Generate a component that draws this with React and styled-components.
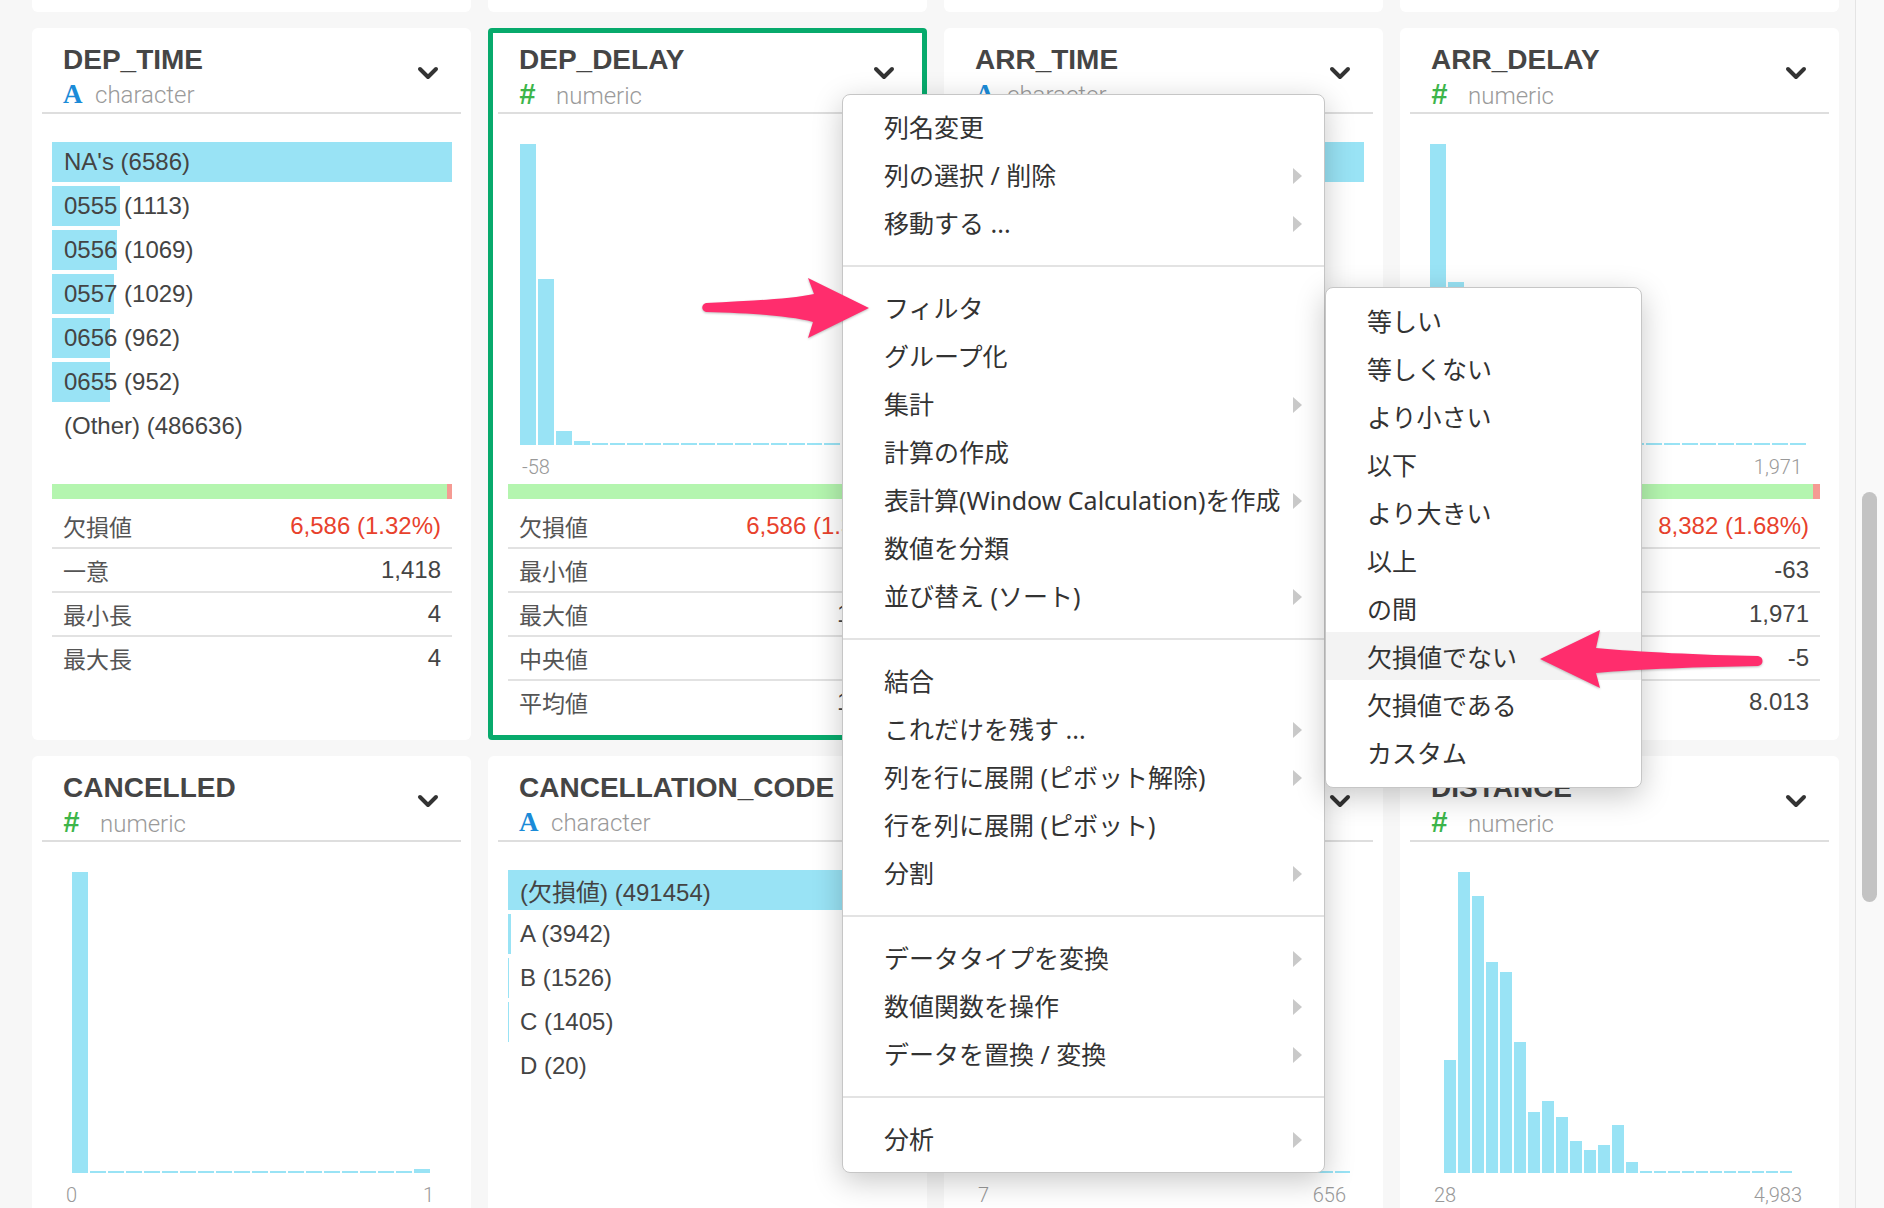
import styled, { createGlobalStyle } from 'styled-components';

const GlobalStyle = createGlobalStyle`
  html, body {
    margin: 0;
    padding: 0;
    background: #f7f7f7;
    overflow: hidden;
  }
  body {
    font-family: "Liberation Sans", "Noto Sans CJK JP", sans-serif;
  }
`;

// Layout
const Page = styled.div`
  position: relative;
  width: 1884px;
  height: 1208px;
  display: flex;
  overflow: hidden;
  background: #f7f7f7;
`;

const Main = styled.div`
  flex: 1;
  overflow: hidden;
`;

const ScrollTrack = styled.div`
  width: 28px;
  border-left: 1px solid #e4e4e4;
  background: #f9f9f9;
`;

const ScrollThumb = styled.div`
  width: 15px;
  height: 410px;
  margin: 492px 0 0 6px;
  border-radius: 8px;
  background: #c3c3c3;
`;

const Grid = styled.div`
  display: grid;
  grid-template-columns: repeat(4, 439px);
  column-gap: 17px;
  row-gap: 16px;
  padding-left: 32px;
`;

const Stub = styled.div`
  height: 12px;
  background: #fff;
  border-radius: 0 0 6px 6px;
`;

// Card
const Card = styled.div`
  height: 712px;
  background: #fff;
  display: flex;
  flex-direction: column;
  overflow: hidden;
  box-shadow: ${(p) => (p.$selected ? 'inset 0 0 0 5px #07aa6c' : 'none')};
  border-radius: ${(p) => (p.$selected ? '4px' : '6px')};
`;

const Header = styled.div`
  margin: 0 10px;
  padding: 15px 22px 3px 21px;
  border-bottom: 2px solid #dedede;
  display: flex;
  justify-content: space-between;
  align-items: flex-start;
`;

const TitleBlock = styled.div`
  min-width: 0;
  display: flex;
  flex-direction: column;
  gap: 2px;
`;

const Title = styled.div`
  font-family: "Liberation Sans", sans-serif;
  font-weight: 700;
  font-size: 28px;
  line-height: 34px;
  color: #454545;
  white-space: nowrap;
`;

const TypeLine = styled.div`
  display: flex;
  align-items: baseline;
  height: 30px;
  line-height: 30px;
`;

const TypeIcon = styled.span`
  width: ${(p) => (p.$kind === 'character' ? '32px' : '37px')};
  font-family: ${(p) =>
    p.$kind === 'character' ? '"Liberation Serif", serif' : '"Liberation Sans", sans-serif'};
  font-weight: 700;
  font-style: ${(p) => (p.$kind === 'character' ? 'normal' : 'italic')};
  font-size: ${(p) => (p.$kind === 'character' ? '27px' : '29px')};
  color: ${(p) => (p.$kind === 'character' ? '#1b8bd8' : '#3db54a')};
`;

const TypeName = styled.span`
  font-family: Roboto, sans-serif;
  font-weight: 300;
  font-size: 24px;
  color: #9a9a9a;
`;

const ChevronBox = styled.div`
  margin-top: 23px;
  width: 22px;
  height: 14px;
  flex: none;
`;

const Body = styled.div`
  padding: 0 19px 0 20px;
  display: flex;
  flex-direction: column;
`;

const ChartArea = styled.div`
  height: 370px;
  display: flex;
  flex-direction: column;
`;

const CategoryList = styled.div`
  padding-top: 28px;
`;

const CategoryRow = styled.div`
  height: 40px;
  margin-bottom: 4px;
  display: flex;
  align-items: center;
  padding-left: 12px;
  font-size: 24px;
  color: #444;
  white-space: nowrap;
  background: linear-gradient(
    to right,
    #99e3f5 ${(p) => p.$pct}%,
    transparent ${(p) => p.$pct}%
  );
`;

const Histogram = styled.div`
  padding-top: 30px;
`;

const Bars = styled.div`
  height: 301px;
  display: flex;
  align-items: flex-end;
  gap: 2px;
  padding: 0 ${(p) => p.$pr}px 0 ${(p) => p.$pl}px;
`;

const Bar = styled.div`
  flex: 1;
  min-height: 2px;
  background: #99e3f5;
`;

const AxisLabels = styled.div`
  height: 39px;
  padding: 4px 18px 0 14px;
  box-sizing: border-box;
  display: flex;
  justify-content: space-between;
  align-items: center;
  font-family: Roboto, sans-serif;
  font-weight: 300;
  font-size: 20px;
  color: #999;
`;

const MissingBar = styled.div`
  height: 15px;
  background: linear-gradient(
    to left,
    #f59b93 ${(p) => p.$pct}%,
    #b4f5af ${(p) => p.$pct}%
  );
`;

const Stats = styled.div`
  margin-top: 6px;
`;

const StatRow = styled.div`
  height: 42px;
  padding: 0 11px;
  display: flex;
  justify-content: space-between;
  align-items: center;
  border-bottom: 2px solid #e2e2e2;
  &:last-child {
    border-bottom: none;
  }
`;

const StatLabel = styled.span`
  font-size: 23px;
  color: #555;
`;

const StatValue = styled.span`
  font-size: 24px;
  color: ${(p) => (p.$red ? '#e8412c' : '#444')};
`;

// Menus
const Menu = styled.div`
  position: absolute;
  left: ${(p) => p.$left}px;
  top: ${(p) => p.$top}px;
  width: ${(p) => p.$width}px;
  box-sizing: border-box;
  padding: ${(p) => p.$pad};
  background: #fff;
  border: 1px solid #c6c6c6;
  border-radius: 8px;
  box-shadow: 0 8px 30px rgba(0, 0, 0, 0.22);
  z-index: ${(p) => p.$z};
  font-family: "Noto Sans", "Noto Sans CJK JP", sans-serif;
`;

const MenuItem = styled.div`
  height: 48px;
  display: flex;
  align-items: center;
  justify-content: space-between;
  padding: 0 21px 0 41px;
  font-size: 25px;
  color: #333;
  white-space: nowrap;
  background: ${(p) => (p.$active ? '#f3f3f3' : 'transparent')};
`;

const MenuDivider = styled.div`
  height: 2px;
  background: #e3e3e3;
  margin: 19px 0 16px;
`;

const Overlay = styled.svg`
  position: absolute;
  left: 0;
  top: 0;
  width: 1884px;
  height: 1208px;
  pointer-events: none;
  z-index: 20;
`;

// Data
const flat = (n, v = 0.006) => Array.from({ length: n }, () => v);

const topRow = [
  {
    name: 'DEP_TIME',
    type: 'character',
    categories: [["NA's", 6586], ['0555', 1113], ['0556', 1069], ['0557', 1029], ['0656', 962], ['0655', 952]],
    other: '(Other) (486636)',
    missing: { text: '6,586 (1.32%)', pct: 1.32 },
    stats: [['一意', '1,418'], ['最小長', '4'], ['最大長', '4']],
  },
  {
    name: 'DEP_DELAY',
    type: 'numeric',
    selected: true,
    hist: { bins: [1, 0.55, 0.045, 0.012, ...flat(17)], pl: 12, pr: 14, min: '-58', max: '1,962' },
    missing: { text: '6,586 (1.32%)', pct: 1.32 },
    stats: [['最小値', '-58'], ['最大値', '1,962'], ['中央値', '-2'], ['平均値', '10.04']],
  },
  {
    name: 'ARR_TIME',
    type: 'character',
    categories: [["NA's", 8382], ['1640', 902], ['1645', 881], ['1630', 874], ['1650', 866], ['1625', 857]],
    other: '(Other) (483911)',
    missing: { text: '8,382 (1.68%)', pct: 1.68 },
    stats: [['一意', '1,440'], ['最小長', '4'], ['最大長', '4']],
  },
  {
    name: 'ARR_DELAY',
    type: 'numeric',
    hist: { bins: [1, 0.54, 0.05, 0.012, ...flat(17)], pl: 10, pr: 14, min: '-63', max: '1,971' },
    missing: { text: '8,382 (1.68%)', pct: 1.68 },
    stats: [['最小値', '-63'], ['最大値', '1,971'], ['中央値', '-5'], ['平均値', '8.013']],
  },
];

const distance = [113, 301, 277, 211, 201, 131, 61, 72, 56, 32, 23, 28, 48, 11].map((h) => h / 301);

const bottomRow = [
  {
    name: 'CANCELLED',
    type: 'numeric',
    hist: { bins: [1, ...flat(18), 0.014], pl: 20, pr: 22, min: '0', max: '1' },
    missing: { text: '0 (0.00%)', pct: 0 },
    stats: [['最小値', '0'], ['最大値', '1']],
  },
  {
    name: 'CANCELLATION_CODE',
    type: 'character',
    categories: [['(欠損値)', 491454], ['A', 3942], ['B', 1526], ['C', 1405], ['D', 20]],
    missing: { text: '0 (0.00%)', pct: 0 },
    stats: [['一意', '5']],
  },
  {
    name: 'AIR_TIME',
    type: 'numeric',
    hist: {
      bins: [0.3, 1, 0.86, 0.62, 0.5, 0.41, 0.3, 0.24, 0.19, 0.14, 0.1, 0.07, 0.05, 0.03, 0.02, 0.01, ...flat(6)],
      pl: 14,
      pr: 14,
      min: '7',
      max: '656',
    },
    missing: { text: '8,382 (1.68%)', pct: 1.68 },
    stats: [['最小値', '7']],
  },
  {
    name: 'DISTANCE',
    type: 'numeric',
    hist: { bins: [...distance, ...flat(11)], pl: 24, pr: 28, min: '28', max: '4,983' },
    missing: { text: '0 (0.00%)', pct: 0 },
    stats: [['最小値', '28']],
  },
];

const mainMenu = [
  [['列名変更'], ['列の選択 / 削除', true], ['移動する ...', true]],
  [
    ['フィルタ'],
    ['グループ化'],
    ['集計', true],
    ['計算の作成'],
    ['表計算(Window Calculation)を作成', true],
    ['数値を分類'],
    ['並び替え (ソート)', true],
  ],
  [
    ['結合'],
    ['これだけを残す ...', true],
    ['列を行に展開 (ピボット解除)', true],
    ['行を列に展開 (ピボット)'],
    ['分割', true],
  ],
  [['データタイプを変換', true], ['数値関数を操作', true], ['データを置換 / 変換', true]],
  [['分析', true]],
];

const filterMenu = ['等しい', '等しくない', 'より小さい', '以下', 'より大きい', '以上', 'の間', '欠損値でない', '欠損値である', 'カスタム'];

// Pieces
const Chevron = () => (
  <ChevronBox>
    <svg width="22" height="14" viewBox="0 0 22 14">
      <polyline points="3,3 11,11 19,3" fill="none" stroke="#333" strokeWidth="4" strokeLinecap="round" strokeLinejoin="round" />
    </svg>
  </ChevronBox>
);

const SubArrow = () => (
  <svg width="10" height="18" viewBox="0 0 10 18" style={{ marginTop: 4 }}>
    <polygon points="0,1 9,9 0,17" fill="#c9c9c9" />
  </svg>
);

const ColumnCard = ({ col }) => {
  const max = col.categories ? col.categories[0][1] : 1;
  return (
    <Card $selected={col.selected}>
      <Header>
        <TitleBlock>
          <Title>{col.name}</Title>
          <TypeLine>
            <TypeIcon $kind={col.type}>{col.type === 'character' ? 'A' : '#'}</TypeIcon>
            <TypeName>{col.type}</TypeName>
          </TypeLine>
        </TitleBlock>
        <Chevron />
      </Header>
      <Body>
        <ChartArea>
          {col.categories ? (
            <CategoryList>
              {col.categories.map(([label, count]) => (
                <CategoryRow key={label} $pct={(count / max) * 100}>
                  {label} ({count})
                </CategoryRow>
              ))}
              {col.other && <CategoryRow $pct={0}>{col.other}</CategoryRow>}
            </CategoryList>
          ) : (
            <Histogram>
              <Bars $pl={col.hist.pl} $pr={col.hist.pr}>
                {col.hist.bins.map((h, i) => (
                  <Bar key={i} style={{ height: `${h * 100}%` }} />
                ))}
              </Bars>
              <AxisLabels>
                <span>{col.hist.min}</span>
                <span>{col.hist.max}</span>
              </AxisLabels>
            </Histogram>
          )}
        </ChartArea>
        <MissingBar $pct={col.missing.pct} />
        <Stats>
          <StatRow>
            <StatLabel>欠損値</StatLabel>
            <StatValue $red>{col.missing.text}</StatValue>
          </StatRow>
          {col.stats.map(([label, value]) => (
            <StatRow key={label}>
              <StatLabel>{label}</StatLabel>
              <StatValue>{value}</StatValue>
            </StatRow>
          ))}
        </Stats>
      </Body>
    </Card>
  );
};

const App = () => {
  return (
    <Page>
      <GlobalStyle />
      <Main>
        <Grid>
          {[0, 1, 2, 3].map((i) => (
            <Stub key={i} />
          ))}
          {topRow.map((col) => (
            <ColumnCard key={col.name} col={col} />
          ))}
          {bottomRow.map((col) => (
            <ColumnCard key={col.name} col={col} />
          ))}
        </Grid>
      </Main>
      <ScrollTrack>
        <ScrollThumb />
      </ScrollTrack>

      <Menu $left={842} $top={94} $width={483} $pad="7px 0 10px" $z={10}>
        {mainMenu.map((group, gi) => (
          <div key={gi}>
            {gi > 0 && <MenuDivider />}
            {group.map(([label, sub]) => (
              <MenuItem key={label}>
                <span>{label}</span>
                {sub && <SubArrow />}
              </MenuItem>
            ))}
          </div>
        ))}
      </Menu>

      <Menu $left={1325} $top={287} $width={317} $pad="8px 0 11px" $z={11}>
        {filterMenu.map((label) => (
          <MenuItem key={label} $active={label === '欠損値でない'}>
            <span>{label}</span>
          </MenuItem>
        ))}
      </Menu>

      <Overlay viewBox="0 0 1884 1208">
        <g fill="#ff2d6d" style={{ filter: 'drop-shadow(0 1px 1px rgba(0,0,0,0.25))' }}>
          <path d="M706 303 C750 301 790 299 814 294 L808 278 L869 308 L808 338 L813 322 C790 316 750 313 706 312 C701 311 701 304 706 303 Z" />
          <path d="M1540 659 L1600 630 L1596 648 C1640 652 1700 655 1758 656 C1764 657 1764 665 1758 666 C1700 667 1640 669 1596 673 L1600 688 Z" />
        </g>
      </Overlay>
    </Page>
  );
};

export default App;
